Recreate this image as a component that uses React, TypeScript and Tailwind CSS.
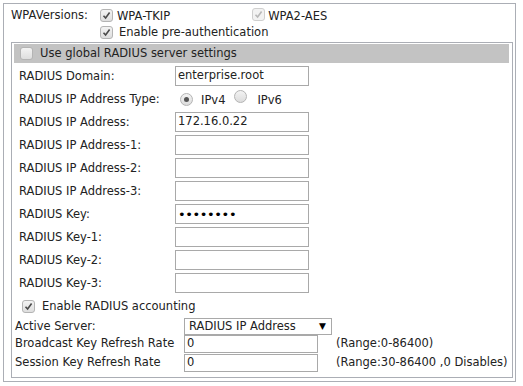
import { ReactNode } from 'react';

function Check({ checked = false, disabled = false }: { checked?: boolean; disabled?: boolean }) {
  return (
    <span
      className={`inline-flex w-[13px] h-[13px] shrink-0 items-center justify-center rounded-[3px] border ${
        disabled ? 'border-[#cfcfcf] bg-[#f2f2f2]' : 'border-[#b4b4b4] bg-gradient-to-b from-[#f3f3f3] to-[#dedede]'
      }`}
    >
      {checked && (
        <svg width="9" height="9" viewBox="0 0 9 9">
          <path
            d="M1.5 4.8 L3.6 7 L7.6 1.6"
            fill="none"
            stroke={disabled ? '#b8b8b8' : '#4a4a4a'}
            strokeWidth="1.6"
          />
        </svg>
      )}
    </span>
  );
}

function Radio({ checked = false }: { checked?: boolean }) {
  return (
    <span className="inline-flex w-[13px] h-[13px] shrink-0 items-center justify-center rounded-full border border-[#b4b4b4] bg-gradient-to-b from-[#f3f3f3] to-[#dcdcdc]">
      {checked && <span className="w-[5px] h-[5px] rounded-full bg-[#555]" />}
    </span>
  );
}

function Field({ value, password = false }: { value?: string; password?: boolean }) {
  return (
    <div className="w-[134px] h-[20px] border border-[#a9a9a9] bg-white flex items-center px-[2px] overflow-hidden">
      {password ? (
        <span className="text-[13px] tracking-[-0.4px] text-black leading-none">••••••••</span>
      ) : (
        <span>{value}</span>
      )}
    </div>
  );
}

function Row({ label, children }: { label: string; children: ReactNode }) {
  return (
    <div className="h-[23px] flex items-start pl-[7px]">
      <div className="w-[156px] h-[23px] flex items-center pt-[2px]">{label}</div>
      <div className="pt-[2px]">{children}</div>
    </div>
  );
}

export default function App() {
  const ipRows = ['RADIUS IP Address-1:', 'RADIUS IP Address-2:', 'RADIUS IP Address-3:'];

  return (
    <div className="w-[523px] h-[386px] bg-white pt-[3px] pl-[3px] text-[11.5px] text-[#222] font-['DejaVu_Sans',Verdana,sans-serif]">
      <div className="w-[513px] h-[379px] border border-[#abaeb5] flex flex-col">
        {/* WPA versions */}
        <div className="h-[38px] pt-[3px] pl-[7px]">
          <div className="h-[17px] flex items-center">
            <span className="w-[89px]">WPAVersions:</span>
            <Check checked />
            <span className="ml-[4px] mt-[3px]">WPA-TKIP</span>
            <span className="ml-[82px]">
              <Check checked disabled />
            </span>
            <span className="ml-[3px] mt-[3px]">WPA2-AES</span>
          </div>
          <div className="h-[17px] flex items-center">
            <span className="w-[89px]" />
            <Check checked />
            <span className="ml-[6px] mt-[1px]">Enable pre-authentication</span>
          </div>
        </div>

        {/* RADIUS settings box */}
        <div className="flex-1 ml-[7px] mr-[2px] mb-[3px] border border-[#abaeb5] flex flex-col">
          <div className="mt-[1px] ml-[2px] mr-[3px] h-[19px] bg-[#c3c3c3] flex items-center pl-[6px]">
            <Check />
            <span className="ml-[7px]">Use global RADIUS server settings</span>
          </div>

          <div className="mt-[1px]">
            <Row label="RADIUS Domain:">
              <Field value="enterprise.root" />
            </Row>
            <Row label="RADIUS IP Address Type:">
              <div className="h-[20px] flex items-center pl-[5px]">
                <Radio checked />
                <span className="ml-[8px] mt-[3px]">IPv4</span>
                <span className="ml-[9px]">
                  <Radio />
                </span>
                <span className="ml-[10px] mt-[3px]">IPv6</span>
              </div>
            </Row>
            <Row label="RADIUS IP Address:">
              <Field value="172.16.0.22" />
            </Row>
            {ipRows.map((l) => (
              <Row key={l} label={l}>
                <Field />
              </Row>
            ))}
            <Row label="RADIUS Key:">
              <Field password />
            </Row>
            <Row label="RADIUS Key-1:">
              <Field />
            </Row>
            <Row label="RADIUS Key-2:">
              <Field />
            </Row>
            <Row label="RADIUS Key-3:">
              <Field />
            </Row>
          </div>

          <div className="h-[24px] flex items-center pl-[10px]">
            <Check checked />
            <span className="ml-[7px] mt-[1px]">Enable RADIUS accounting</span>
          </div>

          <div className="h-[17px] flex items-center pl-[3px]">
            <span className="w-[169px]">Active Server:</span>
            <div className="w-[148px] h-[17px] border border-[#a9a9a9] bg-white flex items-center justify-between pl-[4px] pr-[5px]">
              <span>RADIUS IP Address</span>
              <span className="text-[9px] text-black">▼</span>
            </div>
          </div>
          <div className="h-[19px] flex items-start pl-[3px]">
            <span className="w-[169px] h-[18px] flex items-center">Broadcast Key Refresh Rate</span>
            <div className="w-[134px] h-[18px] border border-[#a9a9a9] flex items-center px-[2px]">0</div>
            <span className="ml-[18px] h-[18px] flex items-center">(Range:0-86400)</span>
          </div>
          <div className="h-[19px] flex items-start pl-[3px]">
            <span className="w-[169px] h-[18px] flex items-center">Session Key Refresh Rate</span>
            <div className="w-[134px] h-[18px] border border-[#a9a9a9] flex items-center px-[2px]">0</div>
            <span className="ml-[18px] h-[18px] flex items-center">(Range:30-86400 ,0 Disables)</span>
          </div>
        </div>
      </div>
    </div>
  );
}
